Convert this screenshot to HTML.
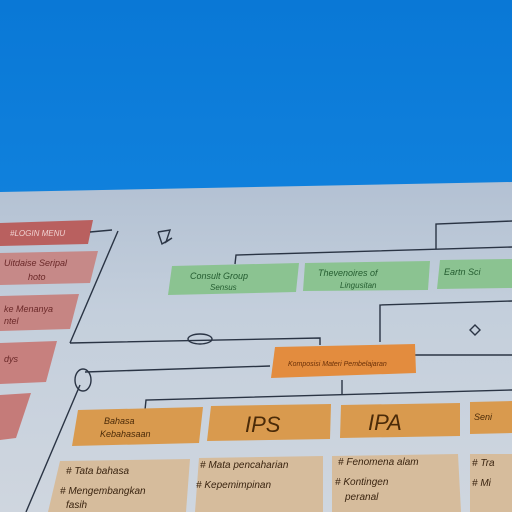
<!DOCTYPE html>
<html><head><meta charset="utf-8"><style>
html,body{margin:0;padding:0;width:512px;height:512px;overflow:hidden;background:#0c7bd9}
svg{display:block}
text{font-family:"Liberation Sans",sans-serif;font-style:italic}
</style></head><body>
<svg width="512" height="512" viewBox="0 0 512 512" xmlns="http://www.w3.org/2000/svg">
<defs>
<linearGradient id="bl" x1="0" y1="0" x2="0" y2="1">
<stop offset="0" stop-color="#0a78d6"/><stop offset="0.6" stop-color="#1386e0"/><stop offset="1" stop-color="#1b8fe8"/>
</linearGradient>
<linearGradient id="sc" x1="0" y1="0" x2="0" y2="1">
<stop offset="0" stop-color="#b3c1d3"/><stop offset="0.4" stop-color="#c4cfdc"/><stop offset="1" stop-color="#cfd6df"/>
</linearGradient>
</defs>
<rect width="512" height="512" fill="url(#bl)"/>
<polygon points="0,192 512,182 512,512 0,512" fill="url(#sc)"/>
<polygon points="0,223 93,220 88,244 0,246" fill="#b9605f"/>
<polygon points="0,253 98,251 90,283 0,285" fill="#c68988"/>
<polygon points="0,296 79,294 70,329 0,331" fill="#c68583"/>
<polygon points="0,343 57,341 46,382 0,384" fill="#c7807e"/>
<polygon points="0,395 31,393 16,438 0,440" fill="#c57b79"/>
<text x="10" y="236" font-size="8" fill="#f0d0d0">#LOGIN MENU</text>
<text x="4" y="266" font-size="9" fill="#6a2828">Uitdaise Seripal</text>
<text x="28" y="280" font-size="9" fill="#6a2828">hoto</text>
<text x="4" y="312" font-size="9" fill="#6a2828">ke Menanya</text>
<text x="4" y="324" font-size="9" fill="#6a2828">ntel</text>
<text x="4" y="362" font-size="9" fill="#6a2828">dys</text>
<g stroke="#2a3444" stroke-width="1.4" fill="none">
<line x1="118" y1="231" x2="70" y2="343"/>
<path d="M70,343 L320,338 L320,345"/>
<line x1="80" y1="385" x2="26" y2="512"/>
<path d="M85,372 L270,366"/>
<path d="M235,264 L236,255 L512,247"/>
<path d="M436,249 L436,224 L512,221"/>
<path d="M380,342 L380,305 L512,301"/>
<path d="M415,355 L512,355"/>
<path d="M145,410 L146,400 L512,390"/>
<path d="M342,380 L342,395"/>
<path d="M90,232 L112,230"/>
<ellipse cx="200" cy="339" rx="12" ry="5"/>
<ellipse cx="83" cy="380" rx="8" ry="11"/>
<path d="M158,232 L170,230 L166,242 L172,238 M158,232 L162,244 L172,238"/>
<path d="M470,330 L475,325 L480,330 L475,335 Z"/>
</g>
<polygon points="172,266 299,263 296,292 168,295" fill="#8bc391"/>
<polygon points="305,263 430,261 428,290 303,291" fill="#8bc391"/>
<polygon points="440,260 512,259 512,288 437,289" fill="#8bc391"/>
<text x="190" y="279" font-size="9" fill="#245c30">Consult Group</text>
<text x="210" y="290" font-size="8" fill="#245c30">Sensus</text>
<text x="318" y="276" font-size="9" fill="#245c30">Thevenoires of</text>
<text x="340" y="288" font-size="8" fill="#245c30">Lingusitan</text>
<text x="444" y="275" font-size="9" fill="#245c30">Eartn Sci</text>
<polygon points="275,347 415,344 416,373 271,378" fill="#e38c3e"/>
<text x="288" y="366" font-size="7" fill="#6a3008">Komposisi Materi Pembelajaran</text>
<polygon points="78,410 203,407 199,443 72,446" fill="#d99a4e"/>
<polygon points="211,406 331,404 330,439 207,441" fill="#d99a4e"/>
<polygon points="341,405 460,403 460,436 340,438" fill="#d99a4e"/>
<polygon points="470,402 512,401 512,433 470,434" fill="#d99a4e"/>
<text x="104" y="424" font-size="9" fill="#4a2a08">Bahasa</text>
<text x="100" y="437" font-size="9" fill="#4a2a08">Kebahasaan</text>
<text x="245" y="432" font-size="22" fill="#4a2a08" font-style="normal">IPS</text>
<text x="368" y="430" font-size="22" fill="#4a2a08" font-style="normal">IPA</text>
<text x="474" y="420" font-size="9" fill="#4a2a08">Seni</text>
<polygon points="60,461 190,459 186,512 48,512" fill="#d6bc9c"/>
<polygon points="199,458 323,456 323,512 195,512" fill="#d6bc9c"/>
<polygon points="332,456 458,454 461,512 332,512" fill="#d6bc9c"/>
<polygon points="470,454 512,454 512,512 470,512" fill="#d6bc9c"/>
<g font-size="10" fill="#3a2410">
<text x="66" y="474"># Tata bahasa</text>
<text x="60" y="494"># Mengembangkan</text>
<text x="66" y="508">fasih</text>
<text x="200" y="468"># Mata pencaharian</text>
<text x="196" y="488"># Kepemimpinan</text>
<text x="338" y="465"># Fenomena alam</text>
<text x="335" y="485"># Kontingen</text>
<text x="345" y="500">peranal</text>
<text x="472" y="466"># Tra</text>
<text x="472" y="486"># Mi</text>
</g>
</svg>
</body></html>
